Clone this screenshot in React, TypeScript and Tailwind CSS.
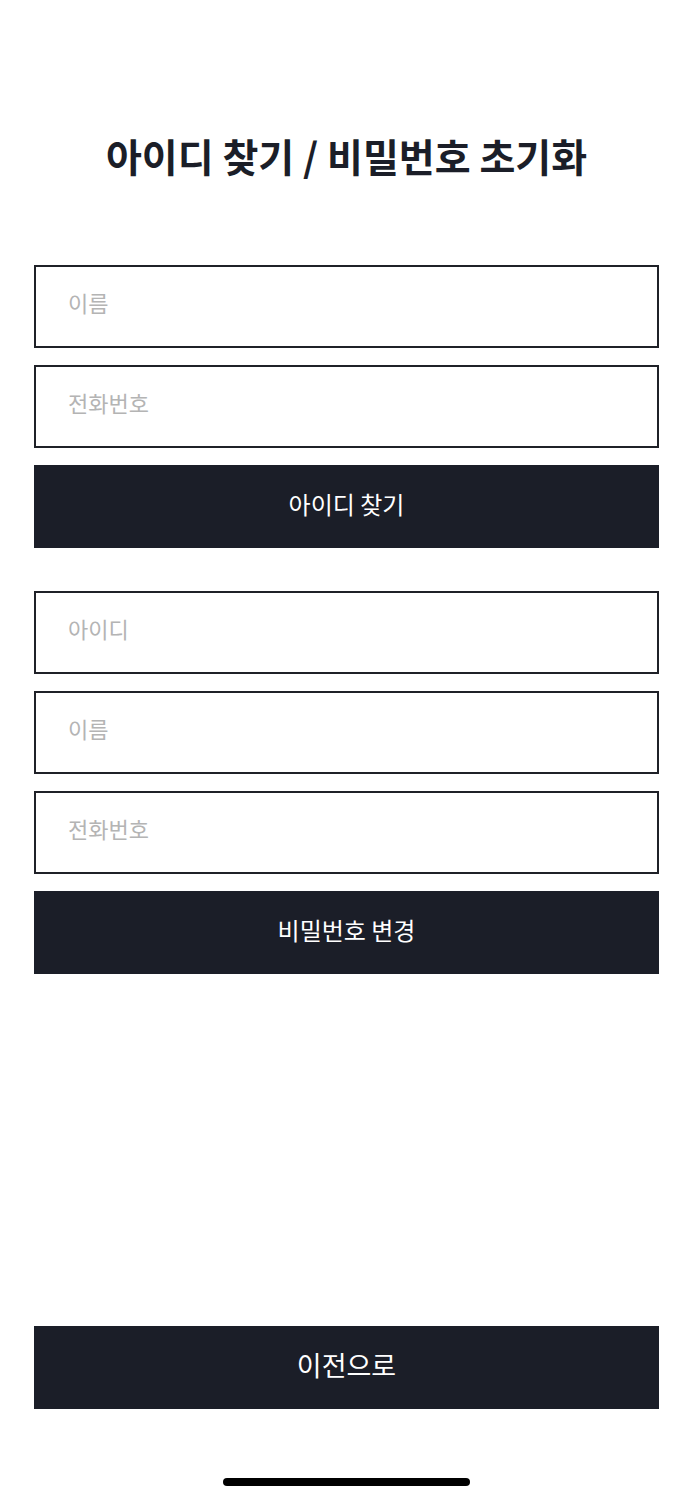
import React from 'react';

const font = { fontFamily: '"Noto Sans CJK KR", "Noto Sans", sans-serif' };

const Field = ({ placeholder }: { placeholder: string }) => (
    <input
        type="text"
        placeholder={placeholder}
        className="h-[83px] w-full border-2 border-[#1f2128] bg-white px-[32px] pb-[10px] text-[22px] text-[#1b1e28] placeholder:text-[#b4b4b4] outline-none"
    />
);

const DarkButton = ({ label, big = false }: { label: string; big?: boolean }) => (
    <button
        type="button"
        className={`flex h-[83px] w-full items-center justify-center bg-[#1b1e28] pb-[5px] text-white ${big ? 'text-[27px]' : 'text-[24px]'}`}
    >
        {label}
    </button>
);

export default function App() {
    return (
        <div className="flex h-[1500px] w-full flex-col bg-white" style={font}>
            <h1 className="mt-[129px] text-center text-[39px] font-bold leading-[52px] text-[#1b1e28]">
                아이디 찾기 / 비밀번호 초기화
            </h1>

            <div className="mx-[34px] mt-[84px] flex flex-col">
                {/* 아이디 찾기 */}
                <div className="flex flex-col gap-[17px]">
                    <Field placeholder="이름" />
                    <Field placeholder="전화번호" />
                    <DarkButton label="아이디 찾기" />
                </div>

                {/* 비밀번호 초기화 */}
                <div className="mt-[43px] flex flex-col gap-[17px]">
                    <Field placeholder="아이디" />
                    <Field placeholder="이름" />
                    <Field placeholder="전화번호" />
                    <DarkButton label="비밀번호 변경" />
                </div>
            </div>

            <div className="flex-1" />

            <div className="mx-[34px]">
                <DarkButton label="이전으로" big />
            </div>

            <div className="flex justify-center pt-[69px] pb-[14px]">
                <div className="h-[8px] w-[247px] rounded-full bg-black" />
            </div>
        </div>
    );
}
